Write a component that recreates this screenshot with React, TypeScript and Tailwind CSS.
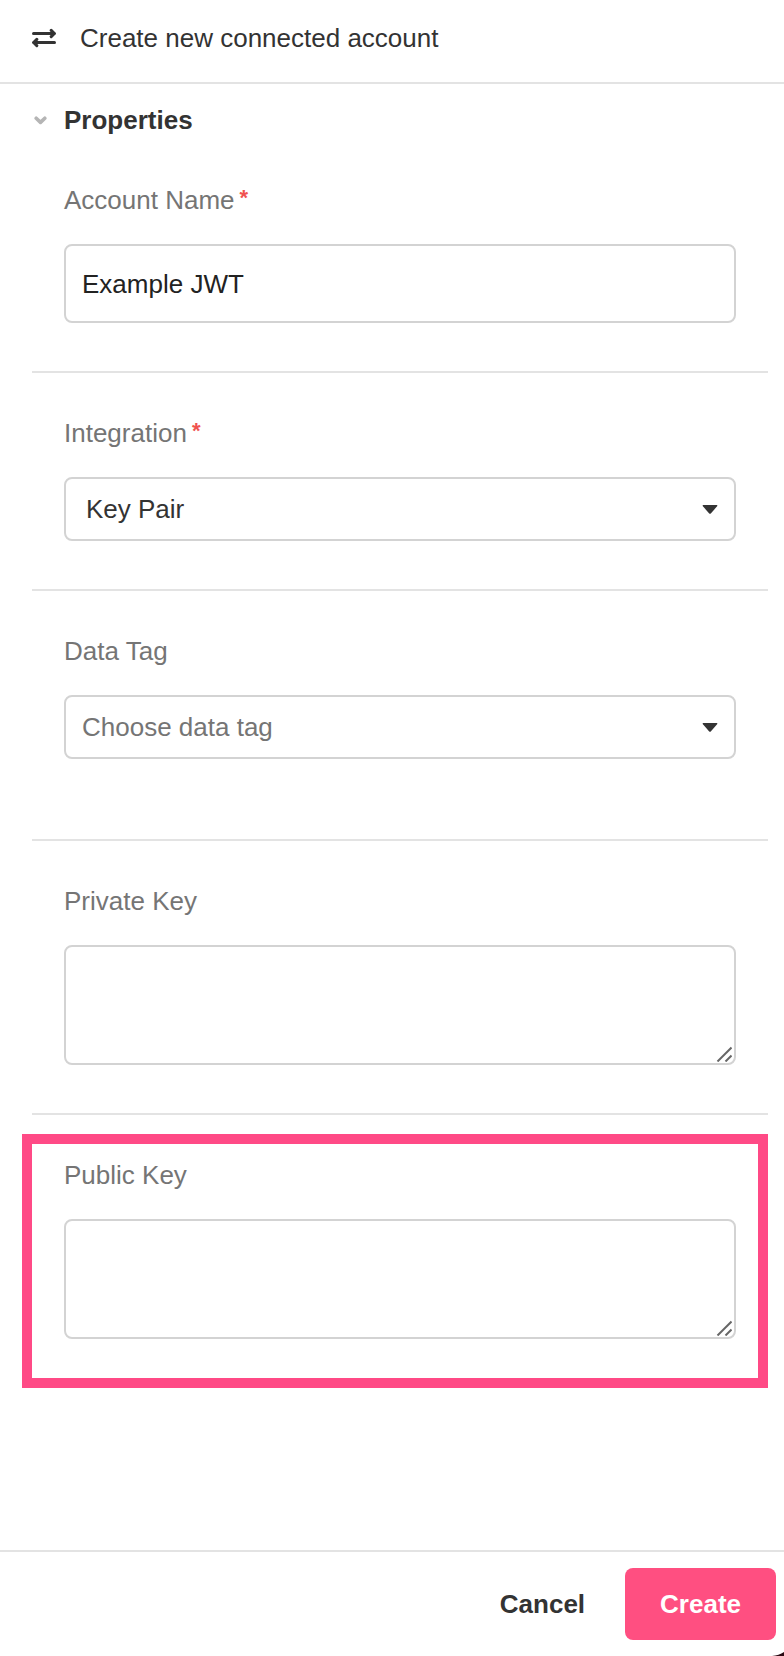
import React, { useState } from 'react';

const controlBase =
  'block w-full rounded-lg border-2 border-[#d3d3d3] bg-white text-[26px] leading-8 outline-none focus:border-[#ff4a86]';

function SwapIcon() {
  return (
    <svg className="h-6 w-6 shrink-0" viewBox="0 0 24 24" fill="none" stroke="currentColor" strokeWidth="3" strokeLinecap="round" aria-hidden="true">
      <path d="M1.5 7.5H22" />
      <path d="M19.2 4.4L22.4 7.5L19.2 10.6" strokeLinejoin="round" />
      <path d="M2 16.5H22.5" />
      <path d="M4.8 13.4L1.6 16.5L4.8 19.6" strokeLinejoin="round" />
    </svg>
  );
}

function ResizeGrip() {
  return (
    <svg className="pointer-events-none absolute right-1 bottom-[3px] h-4 w-4" viewBox="0 0 16 16" fill="none" stroke="#666" strokeWidth="2" aria-hidden="true">
      <path d="M1.5 15.5L15.5 1.5" />
      <path d="M9.5 15.5L15.5 9.5" />
    </svg>
  );
}

interface FieldProps {
  id: string;
  label: string;
  required?: boolean;
  className?: string;
  children: React.ReactNode;
}

function Field({ id, label, required = false, className = 'pt-11 pb-12', children }: FieldProps) {
  return (
    <div className={`relative px-8 ${className}`}>
      <label htmlFor={id} className="mb-7 flex gap-[5px] text-[26px] leading-8 text-[#757575]">
        {label}
        {required && <span className="text-[22px] leading-7 font-bold text-[#f0524f]">*</span>}
      </label>
      {children}
    </div>
  );
}

interface SelectProps {
  id: string;
  value: string;
  options: string[];
  placeholder?: string;
  className: string;
  onChange: (value: string) => void;
}

function Select({ id, value, options, placeholder, className, onChange }: SelectProps) {
  return (
    <div className="relative">
      <select
        id={id}
        value={value}
        onChange={(e) => onChange(e.target.value)}
        className={`${controlBase} h-16 appearance-none pr-14 ${className}`}
      >
        {placeholder && <option value="">{placeholder}</option>}
        {options.map((option) => (
          <option key={option}>{option}</option>
        ))}
      </select>
      <svg className="pointer-events-none absolute top-7 right-[18px] h-[9px] w-4" viewBox="0 0 16 9" fill="#333" aria-hidden="true">
        <path d="M1.2 0H14.8Q15.8 .4 15.1 1.3L9 8.2Q8 9.2 7 8.2L.9 1.3Q.2 .4 1.2 0Z" />
      </svg>
    </div>
  );
}

function KeyInput({ id }: { id: string }) {
  return (
    <div className="relative">
      <textarea id={id} className={`${controlBase} h-[120px] resize-none px-4 py-3 text-[#222]`} />
      <ResizeGrip />
    </div>
  );
}

export default function App() {
  const [name, setName] = useState('Example JWT');
  const [integration, setIntegration] = useState('Key Pair');
  const [dataTag, setDataTag] = useState('');
  const [open, setOpen] = useState(true);

  return (
    <div className="flex min-h-screen flex-col bg-white font-['Liberation_Sans',Arial,sans-serif] text-[26px] leading-8 text-[#333]">
      <header className="flex items-center gap-6 border-b-2 border-[#e3e3e3] px-8 pt-[22px] pb-7">
        <SwapIcon />
        <h1>Create new connected account</h1>
      </header>

      <main className="flex-1 pr-4 pl-8">
        <h2 className="pt-5 font-bold">
          <button type="button" aria-expanded={open} onClick={() => setOpen(!open)} className="flex items-center gap-[17px]">
            <svg className="ml-[2px] h-[9px] w-[13px]" viewBox="0 0 13 9" fill="none" stroke="#b5b5b5" strokeWidth="3.6" strokeLinecap="round" strokeLinejoin="round" aria-hidden="true">
              <path d="M2.2 2.2L6.5 6.4L10.8 2.2" />
            </svg>
            Properties
          </button>
        </h2>

        {open && (
          <div className="divide-y-2 divide-[#e3e3e3]">
            <Field id="account-name" label="Account Name" required className="pt-12 pb-12">
              <input
                id="account-name"
                type="text"
                value={name}
                onChange={(e) => setName(e.target.value)}
                className={`${controlBase} h-[79px] px-4 pt-0.5 text-[#222]`}
              />
            </Field>
            <Field id="integration" label="Integration" required>
              <Select
                id="integration"
                value={integration}
                options={['Key Pair']}
                onChange={setIntegration}
                className="pl-5 text-[#333]"
              />
            </Field>
            <Field id="data-tag" label="Data Tag" className="pt-11 pb-20">
              <Select
                id="data-tag"
                value={dataTag}
                options={[]}
                placeholder="Choose data tag"
                onChange={setDataTag}
                className="pl-4 text-[#757575]"
              />
            </Field>
            <Field id="private-key" label="Private Key">
              <KeyInput id="private-key" />
            </Field>
            <Field id="public-key" label="Public Key">
              <KeyInput id="public-key" />
              {/* highlight frame */}
              <div className="pointer-events-none absolute top-[19px] right-0 -bottom-px -left-[10px] border-[10px] border-[#ff4a86]" />
            </Field>
          </div>
        )}
      </main>

      <footer className="relative flex justify-end gap-2 overflow-hidden border-t-2 border-[#e3e3e3] px-2 py-4">
        <button type="button" className="h-[72px] px-8 font-bold">
          Cancel
        </button>
        <button type="button" className="h-[72px] rounded-lg bg-[#ff4f81] px-[35px] font-bold text-white">
          Create
        </button>
        <svg className="absolute right-0 bottom-0 h-1 w-3" viewBox="0 0 12 4" fill="#2b0a14" aria-hidden="true">
          <path d="M0 4Q7 3.5 12 0V4Z" />
        </svg>
      </footer>
    </div>
  );
}
